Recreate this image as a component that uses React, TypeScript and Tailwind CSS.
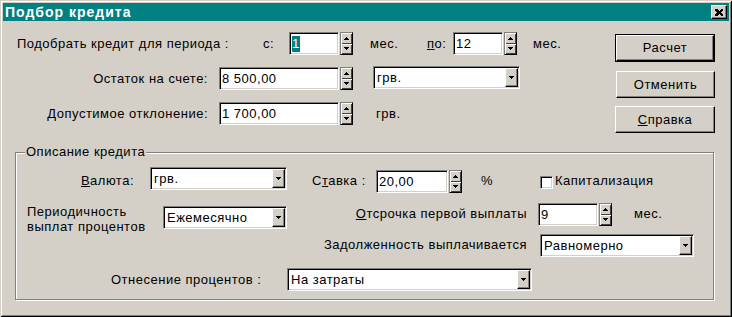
import React from "react";

const sunken =
  "border border-t-[#808080] border-l-[#808080] border-r-white border-b-white shadow-[inset_1px_1px_0_#000,inset_-1px_-1px_0_#d4d0c8] bg-white";
const raised =
  "border border-t-white border-l-white border-r-black border-b-black shadow-[inset_-1px_-1px_0_#808080]";

const Arrow = ({ up = false, w = 7 }: { up?: boolean; w?: number }) => {
  const h = Math.ceil(w / 2);
  return (
    <svg width={w} height={h} shapeRendering="crispEdges">
      <path
        d={up ? `M0 ${h}H${w}L${w / 2} 0z` : `M0 0H${w}L${w / 2} ${h}z`}
        fill="#000"
      />
    </svg>
  );
};

const Field = ({
  className = "",
  value,
  selected = false,
}: {
  className?: string;
  value: string;
  selected?: boolean;
}) => (
  <div className={`${sunken} h-[23px] flex items-center pl-[2px] ${className}`}>
    <span className={selected ? "bg-[#008080] text-white leading-[16px]" : "leading-[16px]"}>
      {value}
    </span>
  </div>
);

const Spin = ({ className = "" }: { className?: string }) => (
  <div
    className={`w-[13px] h-[23px] flex flex-col border border-t-[#808080] border-l-[#808080] border-r-black border-b-black ${className}`}
  >
    <div className="flex-1 flex items-center justify-center shadow-[inset_1px_1px_0_#fff,inset_-1px_-1px_0_#404040]">
      <Arrow up w={5} />
    </div>
    <div className="flex-1 flex items-center justify-center shadow-[inset_1px_1px_0_#fff,inset_-1px_-1px_0_#404040]">
      <Arrow w={5} />
    </div>
  </div>
);

const Combo = ({ className = "", value }: { className?: string; value: string }) => (
  <div className={`${sunken} h-[23px] flex p-[1px] ${className}`}>
    <span className="flex-1 pl-[2px] leading-[19px]">{value}</span>
    <div className={`${raised} w-[13px] h-full flex items-center justify-center bg-[#d4d0c8]`}>
      <Arrow w={5} />
    </div>
  </div>
);

const Btn = ({
  children,
  isDefault = false,
  className = "",
}: {
  children: React.ReactNode;
  isDefault?: boolean;
  className?: string;
}) =>
  isDefault ? (
    <div className={`border border-black ${className}`}>
      <div className={`${raised} h-full flex items-center justify-center`}>{children}</div>
    </div>
  ) : (
    <div className={`${raised} flex items-center justify-center ${className}`}>{children}</div>
  );

export default function App() {
  return (
    <div className="w-[732px] h-[317px] bg-[#d4d0c8] p-[3px] shadow-[inset_1px_1px_0_#d4d0c8,inset_-1px_-1px_0_#000,inset_2px_2px_0_#fff,inset_-2px_-2px_0_#808080] font-['Liberation_Sans',Arial,sans-serif] text-[13px] tracking-[0.5px] text-black leading-[16px]">
      {/* title bar */}
      <div className="h-[18px] bg-[#008080] flex items-center pl-[2px] pr-[2px]">
        <span className="flex-1 text-white font-bold text-[14px] tracking-[1px]">
          Подбор кредита
        </span>
        <div className={`${raised} w-[16px] h-[14px] bg-[#d4d0c8] flex items-center justify-center`}>
          <svg width="8" height="7" shapeRendering="crispEdges">
            <path d="M0 0h2l2 2 2-2h2v1L6 3.5 8 6v1H6L4 5 2 7H0V6l2-2.5L0 1z" fill="#000" />
          </svg>
        </div>
      </div>

      {/* top section */}
      <div className="flex h-[131px]">
        <div className="w-[612px]">
          <div className="mt-[11px] h-[23px] flex items-center">
            <span className="ml-[14px] w-[246px]">Подобрать кредит для периода :</span>
            <span className="w-[26px]">с:</span>
            <Field className="w-[50px]" value="1" selected />
            <Spin className="ml-[1px]" />
            <span className="ml-[17px] w-[57px]">мес.</span>
            <span className="w-[26px]">
              <u>п</u>о:
            </span>
            <Field className="w-[50px]" value="12" />
            <Spin className="ml-[1px]" />
            <span className="ml-[16px]">мес.</span>
          </div>
          <div className="mt-[12px] h-[23px] flex items-center">
            <span className="w-[205px] text-right">Остаток на счете:</span>
            <Field className="ml-[11px] w-[120px]" value="8 500,00" />
            <Spin className="ml-[1px]" />
            <Combo className="ml-[20px] w-[147px] -mt-[2px]" value="грв." />
          </div>
          <div className="mt-[12px] h-[23px] flex items-center">
            <span className="w-[205px] text-right">Допустимое отклонение:</span>
            <Field className="ml-[11px] w-[120px]" value="1 700,00" />
            <Spin className="ml-[1px]" />
            <span className="ml-[23px]">грв.</span>
          </div>
        </div>
        <div className="w-[100px]">
          <Btn isDefault className="mt-[13px] h-[28px]">
            Расчет
          </Btn>
          <Btn className="mt-[9px] h-[27px] ml-[1px]">Отменить</Btn>
          <Btn className="mt-[8px] h-[27px]">
            <span>
              <u>С</u>правка
            </span>
          </Btn>
        </div>
      </div>

      {/* group box */}
      <div className="relative ml-[12px] w-[699px] h-[148px] border border-[#808080] shadow-[inset_1px_1px_0_#fff,1px_1px_0_#fff]">
        <span className="absolute left-[9px] top-[-9px] px-[1px] bg-[#d4d0c8]">Описание кредита</span>

        <div className="mt-[14px] h-[26px] flex items-start">
          <span className="w-[118px] text-right mt-[6px]">
            <u>В</u>алюта:
          </span>
          <Combo className="ml-[16px] w-[137px]" value="грв." />
          <span className="ml-[25px] w-[64px] mt-[6px]">
            С<u>т</u>авка :
          </span>
          <Field className="w-[72px] mt-[3px]" value="20,00" />
          <Spin className="ml-[1px] mt-[3px]" />
          <span className="ml-[19px] w-[59px] mt-[6px]">%</span>
          <div className={`${sunken} w-[13px] h-[13px] mt-[9px]`} />
          <span className="ml-[2px] mt-[6px]">Капитализация</span>
        </div>

        <div className="mt-[10px] h-[31px] flex items-start">
          <span className="ml-[11px] w-[136px] leading-[15px] mt-[1px]">
            Периодичность
            <br />
            выплат процентов
          </span>
          <Combo className="w-[124px] mt-[3px]" value="Ежемесячно" />
          <span className="w-[240px] text-right mt-[3px]">
            <u>О</u>тсрочка первой выплаты
          </span>
          <Field className="ml-[11px] w-[60px]" value="9" />
          <Spin className="ml-[1px]" />
          <span className="ml-[22px] mt-[3px]">мес.</span>
        </div>

        <div className="h-[23px] flex items-start">
          <span className="w-[511px] text-right mt-[3px]">Задолженность выплачивается</span>
          <Combo className="ml-[13px] w-[154px]" value="Равномерно" />
        </div>

        <div className="mt-[11px] h-[23px] flex items-start">
          <span className="ml-[95px] w-[176px] mt-[4px]">Отнесение процентов :</span>
          <Combo className="w-[245px]" value="На затраты" />
        </div>
      </div>
    </div>
  );
}
